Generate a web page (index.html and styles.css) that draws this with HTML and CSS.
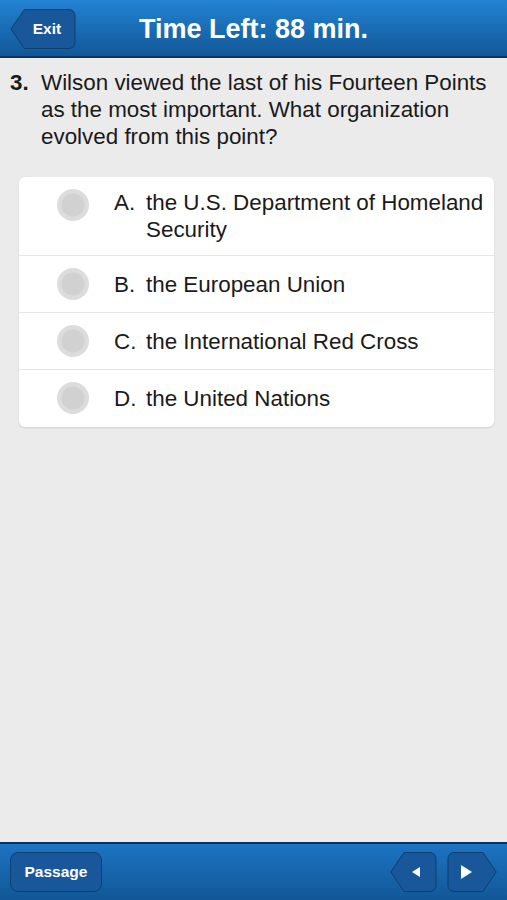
FILE: index.html
```html
<!DOCTYPE html>
<html lang="en">
<head>
    <meta charset="UTF-8">
    <meta name="viewport" content="width=device-width, initial-scale=1.0">
    <title>Practice Test</title>
    <link rel="stylesheet" href="styles.css">
</head>
<body>
    <header class="top-bar">
        <button class="shape-btn exit-btn">
            <svg class="btn-shape" viewBox="0 0 66 40" preserveAspectRatio="none">
                <path d="M14.5 0.5 H59 a6 6 0 0 1 6 6 V33.5 a6 6 0 0 1 -6 6 H14.5 L0.8 20 Z"/>
            </svg>
            <span class="btn-label">Exit</span>
        </button>
        <h1 class="timer">Time Left: 88 min.</h1>
    </header>

    <main class="content">
        <div class="question">
            <span class="q-num">3.</span>
            <p class="q-text">Wilson viewed the last of his Fourteen Points as the most important. What organization evolved from this point?</p>
        </div>

        <ul class="answers">
            <li class="answer">
                <span class="radio"></span>
                <div class="answer-body">
                    <span class="letter">A.</span>
                    <span class="answer-text">the U.S. Department of Homeland Security</span>
                </div>
            </li>
            <li class="answer">
                <span class="radio"></span>
                <div class="answer-body">
                    <span class="letter">B.</span>
                    <span class="answer-text">the European Union</span>
                </div>
            </li>
            <li class="answer">
                <span class="radio"></span>
                <div class="answer-body">
                    <span class="letter">C.</span>
                    <span class="answer-text">the International Red Cross</span>
                </div>
            </li>
            <li class="answer">
                <span class="radio"></span>
                <div class="answer-body">
                    <span class="letter">D.</span>
                    <span class="answer-text">the United Nations</span>
                </div>
            </li>
        </ul>
    </main>

    <footer class="bottom-bar">
        <button class="passage-btn">Passage</button>
        <div class="nav">
            <button class="shape-btn nav-btn">
                <svg class="btn-shape" viewBox="0 0 47 40" preserveAspectRatio="none">
                    <path d="M14 0.5 H40 a6 6 0 0 1 6 6 V33.5 a6 6 0 0 1 -6 6 H14 L0.8 20 Z"/>
                </svg>
                <svg class="arrow" width="8" height="10" viewBox="0 0 8 10"><path d="M8 0 V10 L0 5 Z"/></svg>
            </button>
            <button class="shape-btn nav-btn next">
                <svg class="btn-shape" viewBox="0 0 50 40" preserveAspectRatio="none">
                    <path d="M7 0.5 H36 L49.2 20 L36 39.5 H7 a6 6 0 0 1 -6 -6 V6.5 a6 6 0 0 1 6 -6 Z"/>
                </svg>
                <svg class="arrow" width="11" height="14" viewBox="0 0 11 14"><path d="M0 0 V14 L11 7 Z"/></svg>
            </button>
        </div>
    </footer>
</body>
</html>
```

FILE: styles.css
```css
:root {
    --bar-top: #2383d3;
    --bar-bottom: #125797;
    --btn-fill: #17579a;
    --btn-border: #0d3f70;
    --page-bg: #ebebeb;
    --text-color: #1a1a1a;
}

* {
    box-sizing: border-box;
    margin: 0;
    padding: 0;
}

body {
    width: 507px;
    height: 900px;
    display: flex;
    flex-direction: column;
    background-color: var(--page-bg);
    color: var(--text-color);
    font-family: 'Liberation Sans', Arial, sans-serif;
    overflow: hidden;
}

button {
    font-family: inherit;
    border: none;
    background: none;
    color: white;
    cursor: pointer;
}

.top-bar {
    position: relative;
    height: 58px;
    flex-shrink: 0;
    display: flex;
    align-items: center;
    justify-content: center;
    background: linear-gradient(to bottom, var(--bar-top), var(--bar-bottom));
    border-bottom: 2px solid #0b355e;
}

.timer {
    color: white;
    font-size: 27px;
    font-weight: 700;
    margin-top: 2px;
}

.shape-btn {
    position: relative;
    display: flex;
    align-items: center;
    justify-content: center;
}

.btn-shape {
    position: absolute;
    inset: 0;
    width: 100%;
    height: 100%;
}

.btn-shape path {
    fill: var(--btn-fill);
    stroke: var(--btn-border);
    stroke-width: 1;
}

.btn-label,
.arrow {
    position: relative;
}

.exit-btn {
    position: absolute;
    left: 10px;
    top: 9px;
    width: 66px;
    height: 40px;
    padding-left: 8px;
    font-size: 15.5px;
    font-weight: 700;
}

.content {
    flex: 1;
}

.question {
    display: flex;
    padding: 11px 10px 0 10px;
    font-size: 22.4px;
    line-height: 27px;
}

.q-num {
    width: 31px;
    flex-shrink: 0;
    font-weight: 700;
}

.answers {
    list-style: none;
    margin: 27px 13px 0 19px;
    background: white;
    border-radius: 6px;
    box-shadow: 0 1px 2px rgba(0, 0, 0, 0.12);
}

.answer {
    display: flex;
    align-items: flex-start;
    min-height: 57px;
    padding: 12px 6px 12px 38px;
    font-size: 22.4px;
    line-height: 27px;
    border-bottom: 1px solid #e6e6e6;
}

.answer:last-child {
    border-bottom: none;
}

.radio {
    width: 32px;
    height: 32px;
    flex-shrink: 0;
    border-radius: 50%;
    background: radial-gradient(circle, #d1d1d1 0 11px, #dcdcdc 12px);
    margin-right: 25px;
}

.answer-body {
    display: flex;
    align-self: center;
}

.letter {
    width: 32px;
    flex-shrink: 0;
}

.bottom-bar {
    height: 58px;
    flex-shrink: 0;
    display: flex;
    align-items: center;
    justify-content: space-between;
    padding: 0 10px;
    background: linear-gradient(to bottom, #1c74c2, var(--bar-bottom));
    border-top: 2px solid #0b355e;
}

.passage-btn {
    width: 92px;
    height: 40px;
    border-radius: 8px;
    background: var(--btn-fill);
    border: 1px solid var(--btn-border);
    font-size: 15.5px;
    font-weight: 700;
}

.nav {
    display: flex;
    gap: 10px;
}

.nav-btn {
    width: 47px;
    height: 40px;
    padding-left: 5px;
}

.nav-btn.next {
    width: 50px;
    padding-left: 0;
    padding-right: 12px;
}

.arrow path {
    fill: white;
}
```
